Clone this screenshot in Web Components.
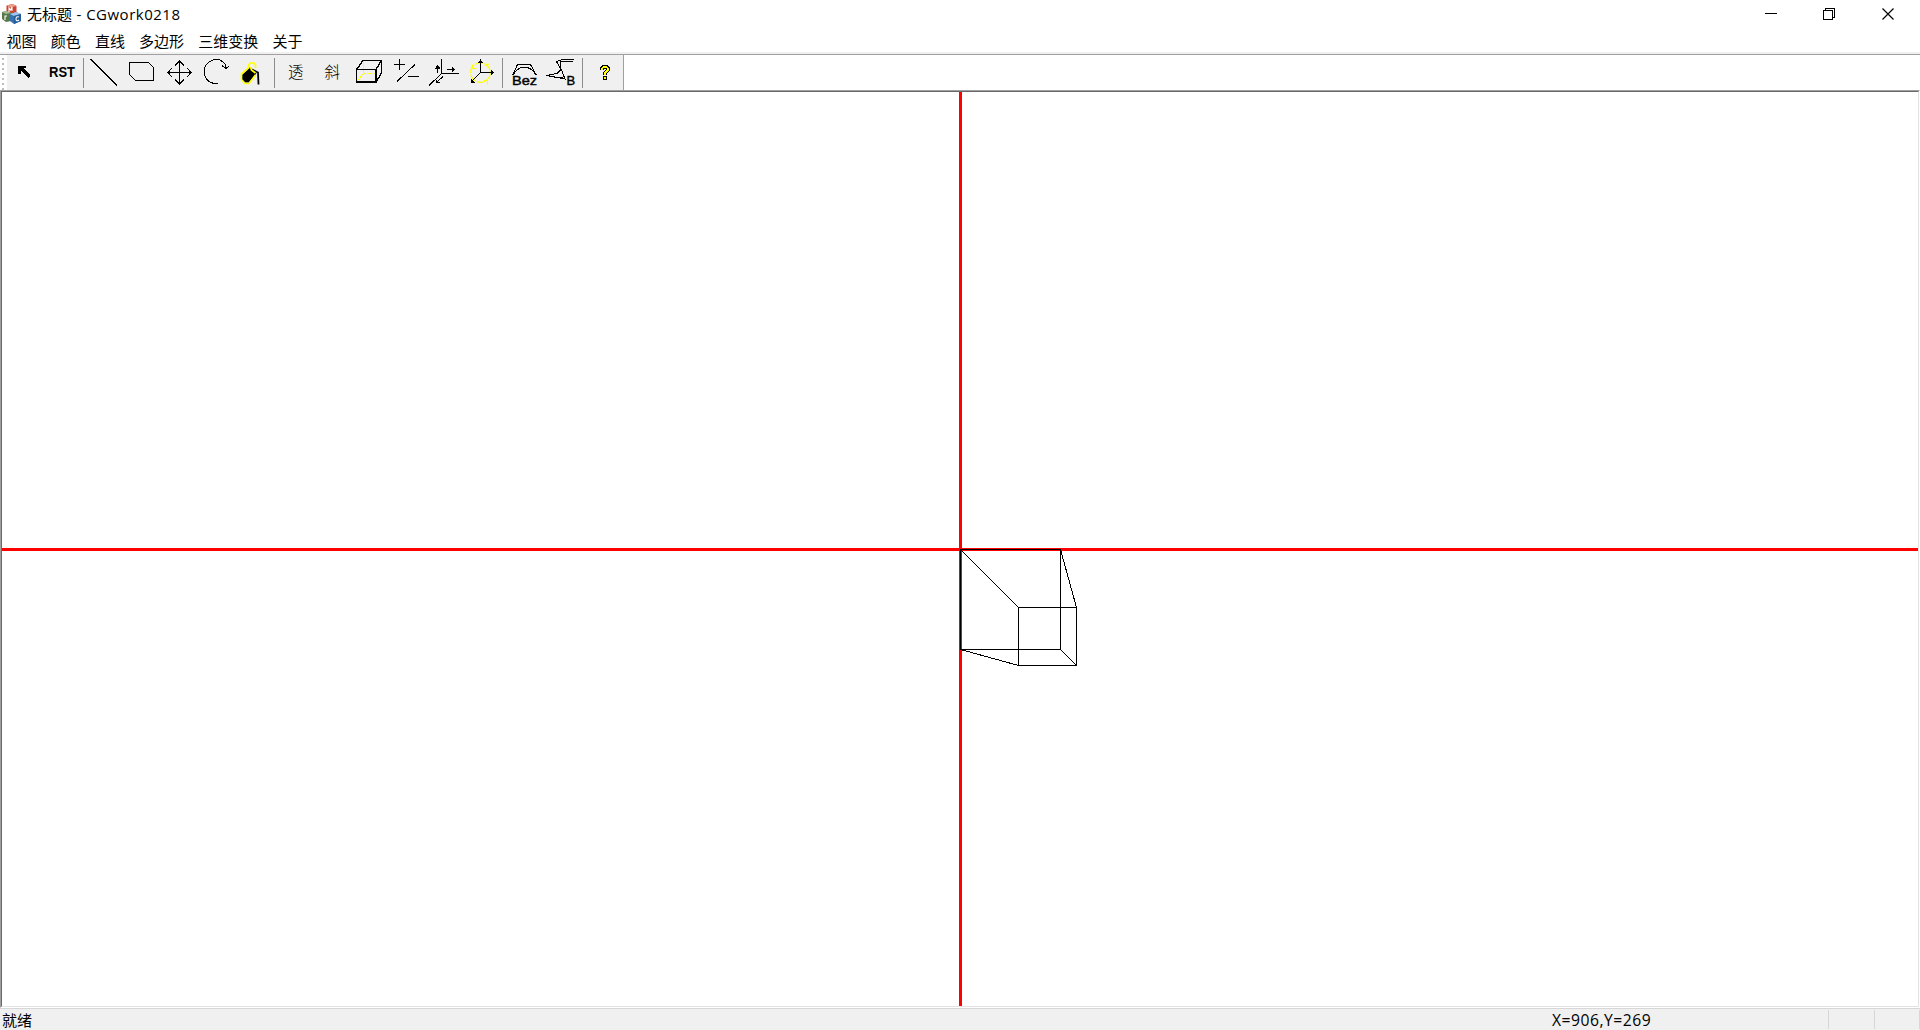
<!DOCTYPE html>
<html lang="zh-CN"><head><meta charset="utf-8"><title>CGwork0218</title>
<style>html,body{margin:0;height:100%;overflow:hidden;background:#fff}</style></head>
<body><cg-app></cg-app>
<script>
const FONT='"Open Sans","Noto Sans CJK SC",sans-serif';
function define(name,html){
  customElements.define(name,class extends HTMLElement{
    constructor(){super();this.attachShadow({mode:'open'}).innerHTML=html;}
  });
}
// Toolbar cell: each icon is drawn in window coordinates, the viewBox selects its slice.
const icons={
arrow:`<path d="M18 66H26V68H23.500L30.500 75.500L28 78L20.500 70.500V74H18Z" fill="#000" stroke="none"/>`,
rst:`<text x="49" y="77" font-size="14" font-weight="bold" textLength="26" lengthAdjust="spacingAndGlyphs">RST</text>`,
line:`<path d="M90.5 59.5L117.5 85.5" stroke-width="1.4"/>`,
poly:`<path d="M129.5 62.5H148.5L153.5 67.5V80.5H135.5L129.5 74.5Z"/>`,
move:`<path d="M179.5 61V84M168 72.5H191M175 65.5L179.5 61L184 65.5M175 79.5L179.5 84L184 79.5M172 68L168 72.5L172 77M187 68L191 72.5L187 77"/>`,
rot:`<path d="M217.500 83.500H214A12 12 0 0 1 208.500 62.500Q216 56.500 222.500 61.500Q226 64 226 68M222 65.500L226 68.500L229.500 65.500"/>`,
fill:`<g shape-rendering="auto"><path d="M249.500 67.500L256.500 73L249 82.500H245L242 79.500V75Z" fill="#000" stroke="none"/><path d="M251 69L258 72.500L258.500 84.500M250.500 70L255.500 74" stroke-width="1.800"/><path d="M248.500 67V65.500L250 63H254L255.500 65V68M249 67.500L241.500 74V79.500L245 83.500H249L255.500 75M250.500 67L251.500 70L255.500 73" stroke="#ff0" stroke-width="1.700"/></g>`,
persp:`<text x="288" y="78" font-size="15.500" font-weight="300">透</text>`,
obliq:`<text x="324.500" y="78" font-size="15.500" font-weight="300">斜</text>`,
cube:`<path d="M363.500 61V73.500L356.500 82" stroke="#ff0"/><path d="M364 73.500H381" stroke="#ff0" stroke-dasharray="2 1"/><path d="M356.500 69.500H376V82H356.500ZM356.500 69.500L363 60.500H381.500V73L376 82M376 69.500L381.500 60.500" stroke-width="1.400"/>`,
sign:`<path d="M399.500 59V70M394 64.500H405M415 64.500L397 81.500M408 76.500H419"/>`,
axes:`<path d="M441.500 59V73.500H459M441.500 73.500L429 85.500M437.500 65V73M447 69.500H455M443 76.500L436.500 82.500M436.500 79.500V82.500H440"/><path d="M435 68.500L437.500 65L440.500 68.500ZM452 67V72.500L455 69.500Z" fill="#000" stroke="none"/>`,
orbit:`<g shape-rendering="auto"><circle cx="480.500" cy="72.500" r="9.800" stroke="#ff0" stroke-width="1.200" stroke-dasharray="9 1"/><path d="M472.500 64.500V68.500H476.500M484.500 65.500L489 64M486 64L488.500 68M484 80.500H488M487.500 81V85" stroke="#ff0" stroke-width="1.100"/></g><path d="M480.500 60V72.500H493M480.500 72.500L471 82"/><path d="M478 63L480.500 59L483 63ZM491 70V75L494.500 72.500ZM471 78.500V82.500H475Z" fill="#000" stroke="none"/>`,
bez:`<path d="M512.500 75.500L517.500 64.500H530.500L536.500 75.500M513 75Q518 67 524.500 67Q531 67 536.500 75.500"/><text x="512" y="85" font-size="13" textLength="25" lengthAdjust="spacingAndGlyphs" class="m">Bez</text>`,
spline:`<path d="M574 59.500H563L556.500 61.500L561.500 70L565 79L547 75.500M573 61.500H560.500V70L557 73.500L546 75.500M549 76.500L563 78"/><text x="566.500" y="85" font-size="13" class="m">B</text>`,
help:`<path d="M602 70V68.500L603.500 67H606.500L608 68.500V70L605 73V75" stroke-width="4"/><path d="M603 76h4v4h-4z" fill="#000" stroke="none"/><path d="M602 70V68.500L603.500 67H606.500L608 68.500V70L605 73V75M605 77V79" stroke="#ff0" stroke-width="1.600"/>`
};
customElements.define('tool-button',class extends HTMLElement{
  connectedCallback(){
    const x=+this.getAttribute('x'),w=+this.getAttribute('w');
    this.attachShadow({mode:'open'}).innerHTML=`<style>:host{display:block;flex:none;width:${w}px;height:35px}svg{display:block}text{fill:#000;stroke:none;font-family:"Liberation Sans","Noto Sans CJK SC",sans-serif}.m{stroke:#000;stroke-width:.4px}</style><svg width="${w}" height="35" viewBox="${x} 55 ${w} 35" fill="none" stroke="#000" shape-rendering="crispEdges">${icons[this.getAttribute('icon')]}</svg>`;
  }});
define('tool-sep',`<style>:host{display:block;flex:none;width:1px;height:30px;margin-top:3px;background:#8c8c8c}</style>`);
define('tool-bar',`<style>:host{display:flex;height:35px;border-top:1px solid #a0a0a0}
.grip{width:7px;height:35px;background:radial-gradient(circle at 3px 3px,#bdbdbd 1.2px,transparent 1.3px) 0 1px/7px 5px}
.strip{display:flex;background:#f0f0f0;width:616px;height:35px}.end{width:1px;background:#a0a0a0}</style>
<div class="grip"></div><div class="strip"><slot></slot></div><div class="end"></div>`);
define('title-bar',`<style>:host{display:flex;height:28px;align-items:center;font:15px/28px ${FONT};color:#000}
.logo{margin-left:1px;width:20px;height:20px}.t{margin-left:6px;flex:1;white-space:pre}
.c{display:block}</style>
<svg class="logo" viewBox="1 4 20 20"><path d="M6.500 5.500l6-1.500 4 2v6.500l-6 1.500-4-2z" fill="#c9432f"/><path d="M6.500 5.500l6-1.500 4 2-6 1.500z" fill="#ef9a88"/><path d="M2 12l5-1 4 2v8l-5 1-4-3z" fill="#57784a"/><path d="M2 12l5-1 4 2-5 1z" fill="#a2b991"/><path d="M10 14l6-2 5 2v7l-7 3-4-3z" fill="#3872ad"/><path d="M10 14l6-2 5 2-7 2z" fill="#9fc5e8"/><path d="M14 16l7-2v7l-7 3z" fill="#255d9b"/><path d="M9 12V8l1.500 2L12 7v4M5 20v-4h2M19 17q-3-1-3 2t3 1" fill="none" stroke="#fff" stroke-width="1.100"/></svg>
<span class="t"><slot></slot></span>
<svg class="c" width="174" height="28" viewBox="1746 0 174 28" fill="none" stroke="#000" shape-rendering="crispEdges"><path d="M1765 13.500H1777M1823.500 10.500H1832.500V19.500H1823.500ZM1825.500 10V8.500H1834.500V17.500H1833"/><path d="M1882.500 8.500L1893.500 19.500M1893.500 8.500L1882.500 19.500" shape-rendering="auto" stroke-width="1.200"/></svg>`);
define('menu-item',`<style>:host{display:block}</style><slot></slot>`);
define('menu-bar',`<style>:host{display:flex;gap:14.200px;height:24px;padding-left:6.500px;font:15px/27px ${FONT};border-bottom:2px solid #f0f0f0;color:#000}</style><slot></slot>`);
define('draw-view',`<style>:host{display:block;box-sizing:border-box;height:918px;border-top:1px solid #a0a0a0;border-left:1px solid #a0a0a0;border-right:1px solid #fff;border-bottom:1px solid #fff}
div{box-sizing:border-box;height:916px;border:1px solid #696969;border-right-color:#e3e3e3;border-bottom-color:#e3e3e3;background:#fff}svg{display:block}</style>
<div><svg width="1916" height="914" viewBox="2 92 1916 914" shape-rendering="crispEdges" fill="none" stroke="#000"><path d="M960.500 92V1006M2 549.500H1918" stroke="#f00" stroke-width="3"/><path d="M960.500 549.500H1060.500V649.500H960.500ZM1018.500 607.500H1076.500V665.500H1018.500ZM960.500 549.500L1018.500 607.500M1060.500 549.500L1076.500 607.500M960.500 649.500L1018.500 665.500M1060.500 649.500L1076.500 665.500"/></svg></div>`);
define('status-bar',`<style>:host{display:flex;box-sizing:border-box;height:22px;border-top:1px solid #d7d7d7;background:#f0f0f0;font:15px/22px ${FONT};color:#000}
.r{margin-left:2px;width:1550px}.p{width:276px;font-size:15.700px;letter-spacing:.5px}.k{box-sizing:border-box;width:46px;height:19px;margin-top:1px;border-left:1px solid #d7d7d7}.k:last-child{border-right:1px solid #d7d7d7}</style>
<span class="r"><slot name="ready"></slot></span><span class="p"><slot name="pos"></slot></span><div class="k"></div><div class="k"></div>`);
const cells=[['arrow',7,36],['rst',43,40],0,['line',84,38],['poly',122,38],['move',160,38],['rot',198,36],['fill',234,40],0,['persp',275,38],['obliq',313,37],['cube',350,38],['sign',388,37],['axes',425,40],['orbit',465,37],0,['bez',503,39],['spline',542,40],0,['help',583,40]];
define('cg-app',`<style>:host{display:flex;flex-direction:column;width:1920px;height:1030px;background:#fff}.latin{letter-spacing:.5px}</style>
<title-bar>无标题<span class="latin"> - CGwork0218</span></title-bar>
<menu-bar>${['视图','颜色','直线','多边形','三维变换','关于'].map(t=>`<menu-item>${t}</menu-item>`).join('')}</menu-bar>
<tool-bar>${cells.map(c=>c?`<tool-button icon="${c[0]}" x="${c[1]}" w="${c[2]}"></tool-button>`:'<tool-sep></tool-sep>').join('')}</tool-bar>
<draw-view></draw-view>
<status-bar><span slot="ready">就绪</span><span slot="pos">X=906,Y=269</span></status-bar>`);
</script></body></html>
